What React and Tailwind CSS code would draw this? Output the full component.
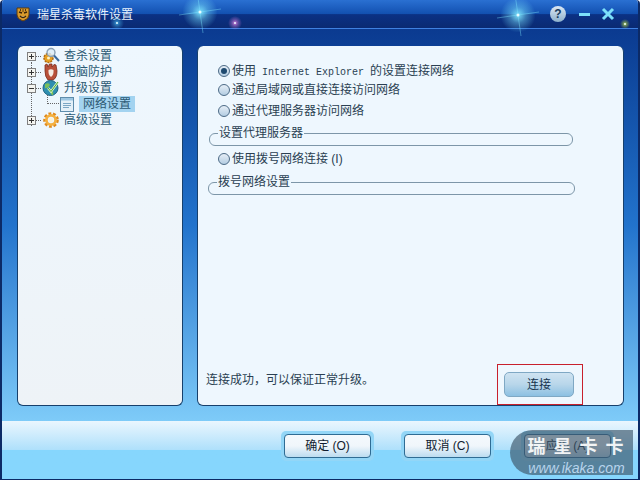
import React from 'react';

const cjk = "font-['Liberation_Sans','Noto_Sans_CJK_SC',sans-serif]";

function Star({ className, size = 40, color = '#7fe8ff' }) {
	const c = size / 2;
	const id = `g${size}${color.slice(1)}`;
	return (
		<svg className={`absolute ${className}`} width={size} height={size} viewBox={`0 0 ${size} ${size}`}>
			<defs>
				<radialGradient id={id}>
					<stop offset="0" stopColor={color} stopOpacity="0.95" />
					<stop offset="0.45" stopColor={color} stopOpacity="0.4" />
					<stop offset="1" stopColor={color} stopOpacity="0" />
				</radialGradient>
			</defs>
			<circle cx={c} cy={c} r={size > 20 ? c * 0.8 : c} fill={`url(#${id})`} />
			{size > 20 && <path d={`M${c - 3} 1 L${c + 3} ${size - 1} M1 ${c + 3} L${size - 1} ${c - 3}`} stroke={color} strokeWidth="1" opacity="0.4" />}
			<circle cx={c} cy={c} r={size > 20 ? 1.5 : 1} fill="#e8fbff" />
		</svg>
	);
}

function TigerLogo() {
	return (
		<svg width="16" height="16" viewBox="0 0 16 16">
			<path d="M2 2 L14 2 L14 9 Q14 13 8 15 Q2 13 2 9 Z" fill="#d99a2b" stroke="#5a3a10" strokeWidth="1" />
			<path d="M4 6 L7 7 M12 6 L9 7" stroke="#3a2408" strokeWidth="1.4" />
			<path d="M5 10 Q8 13 11 10" stroke="#3a2408" strokeWidth="1.2" fill="#f4d58a" />
			<path d="M8 3 V6 M5.5 3 V5 M10.5 3 V5" stroke="#5a3a10" strokeWidth="1" />
		</svg>
	);
}

function Twisty({ open }) {
	return (
		<span className="w-[9px] h-[9px] border border-[#808080] bg-[#f4f4f0] flex items-center justify-center relative shrink-0">
			<span className="absolute w-[5px] h-px bg-[#333]" />
			{!open && <span className="absolute w-px h-[5px] bg-[#333]" />}
		</span>
	);
}

function SearchGear() {
	return (
		<svg width="18" height="18" viewBox="0 0 18 18">
			<circle cx="6.5" cy="11" r="4.5" fill="#e8a020" stroke="#b06a10" strokeDasharray="2 1" strokeWidth="1.5" />
			<circle cx="6.5" cy="11" r="1.5" fill="#fff2c0" />
			<circle cx="9" cy="5.5" r="4" fill="#dcecf6" fillOpacity="0.8" stroke="#8aa0b4" strokeWidth="1.4" />
			<path d="M12 8.5 L17 14" stroke="#3a6a9c" strokeWidth="2" />
		</svg>
	);
}

function GloveIcon() {
	return (
		<svg width="18" height="18" viewBox="0 0 18 18">
			<path d="M3 2 L5 1 L6 4 L7.5 1 L10 1 L10 4 L12 1.5 L14 2 L15 8 Q15 15 11 17 L6 17 Q3 14 3 8 Z" fill="#b8503a" stroke="#7c2c1c" strokeWidth="0.8" />
			<path d="M6.5 7 Q6 12 9 14 Q12 12 11.5 7 Q9 5.5 6.5 7 Z" fill="#f4ece4" />
		</svg>
	);
}

function GlobeIcon() {
	return (
		<svg width="18" height="18" viewBox="0 0 18 18">
			<circle cx="8.5" cy="9" r="7.5" fill="#2f8fb0" stroke="#1d6280" strokeWidth="1" />
			<path d="M3 5 Q7 3 8 6 Q6 10 3 9 Z M9 12 Q12 12 11 16 Q8 16 9 12 Z" fill="#7bbf5a" />
			<path d="M6 9 L9 12.5 L16 3" stroke="#dcf5c0" strokeWidth="2.4" fill="none" />
			<path d="M6 9 L9 12.5 L16 3" stroke="#4aa838" strokeWidth="1" fill="none" />
		</svg>
	);
}

function PageIcon() {
	return (
		<svg width="14" height="15" viewBox="0 0 14 15">
			<rect x="0.5" y="0.5" width="13" height="14" fill="#e4f0f8" stroke="#5e8cab" />
			<rect x="1" y="1" width="12" height="2.5" fill="#9cc6e2" />
			<path d="M3 6.5 H11 M3 8.5 H11 M3 10.5 H9" stroke="#7ba6c4" />
		</svg>
	);
}

function GearIcon() {
	return (
		<svg width="18" height="18" viewBox="0 0 18 18">
			<circle cx="9" cy="9" r="6" fill="none" stroke="#e08a1c" strokeWidth="3.6" strokeDasharray="2.6 1.6" />
			<circle cx="9" cy="9" r="4.6" fill="none" stroke="#f4b040" strokeWidth="2.8" />
			<circle cx="9" cy="9" r="2.2" fill="#fbf2d8" />
		</svg>
	);
}

function TreeRow({ open, icon, label }) {
	return (
		<div className="flex items-center h-4">
			<Twisty open={open} />
			<span className="w-[5px] border-t border-dotted border-[#666] mr-px" />
			<span className="w-[18px] h-4 flex items-center justify-center shrink-0">{icon}</span>
			<span className="ml-[4px] text-[#2c5a74] text-xs">{label}</span>
		</div>
	);
}

function Radio({ checked }) {
	return (
		<span className="w-3 h-3 rounded-full border border-[#4c6a86] bg-gradient-to-b from-[#e6eef6] to-[#b4cde2] flex items-center justify-center shrink-0">
			{checked && <span className="w-[6px] h-[6px] rounded-full bg-[#1f4a70]" />}
		</span>
	);
}

function RadioRow({ checked, className, children }) {
	return (
		<div className={`flex items-center gap-[2px] h-4 text-xs text-[#2a3f52] ${className}`}>
			<Radio checked={checked} />
			<span className="whitespace-pre">{children}</span>
		</div>
	);
}

function Group({ label, className }) {
	return (
		<fieldset className={`h-[19px] border border-[#7d96a8] rounded-[6px] ${className}`}>
			<legend className="ml-[8px] px-px text-xs leading-[12px] text-[#2a3f52] bg-[#eef7fe]">{label}</legend>
		</fieldset>
	);
}

function DlgButton({ children }) {
	return (
		<div className="p-[3px] bg-[#93d6f7] rounded-[5px] shrink-0">
			<button className="block w-[87px] h-[24px] rounded-[4px] border border-[#2f6c94] bg-gradient-to-b from-[#f4f9fd] via-[#f0f6fb] to-[#bcdcf0] text-xs text-[#101c30]">
				{children}
			</button>
		</div>
	);
}

export default function App() {
	return (
		<div className={`relative w-[640px] h-[480px] overflow-hidden flex flex-col border-x-2 border-b border-[#0c2a66] rounded-t-[4px] ${cjk}`}>
			<div className="h-[29px] shrink-0 bg-[linear-gradient(to_bottom,#2a70d2_0%,#1250b0_50%,#0b3184_52%,#0a2a72_100%)] border-b border-[#3f80e0] flex items-center pl-[13px] pr-[23px]">
				<TigerLogo />
				<span className="ml-[6px] mt-[2px] text-xs text-[#e8f2fc]">瑞星杀毒软件设置</span>
				<div className="ml-auto flex items-center gap-[11px]">
					<span className="w-4 h-4 rounded-full bg-gradient-to-b from-[#dce8f4] to-[#8cb0cc] text-[#173a5c] text-xs font-bold flex items-center justify-center">?</span>
					<span className="w-[11px] h-[3px] bg-[#7ce0fa] ml-[2px]" />
					<svg width="14" height="14" viewBox="0 0 14 14">
						<path d="M2 2 L12 12 M12 2 L2 12" stroke="#7ce0fa" strokeWidth="3" />
					</svg>
				</div>
			</div>

			<div className="flex-1 bg-gradient-to-b from-[#0b3a90] via-[#2273cc] to-[#7ecbf8] flex gap-[14px] pl-[15px] pr-[14px] pt-[17px] pb-[15px]">
				<div className="relative w-[166px] bg-gradient-to-b from-[#eef7fe] to-[#eef3f7] rounded-[6px] border-b border-x border-[#17406c] pl-[9px] pt-[2px]">
					<div className="absolute left-[13px] top-[16px] h-[64px] border-l border-dotted border-[#666]" />
					<TreeRow icon={<SearchGear />} label="查杀设置" />
					<TreeRow icon={<GloveIcon />} label="电脑防护" />
					<TreeRow open icon={<GlobeIcon />} label="升级设置" />
					<div className="flex items-center h-4 pl-[20px]">
						<span className="w-[12px] h-[9px] border-l border-b border-dotted border-[#666] -mt-[9px] mr-px" />
						<PageIcon />
						<span className="ml-[5px] px-[4px] h-4 leading-4 bg-[#a3d3f0] text-xs text-[#2c5a74]">网络设置</span>
					</div>
					<TreeRow icon={<GearIcon />} label="高级设置" />
				</div>

				<div className="relative flex-1 bg-[#eef7fe] rounded-[6px] border-b border-x border-[#17406c] flex flex-col pl-[10px] pr-[50px]">
					<div className="flex flex-col pt-[17px] pl-[10px]">
						<RadioRow checked>
							使用<span className="font-['Liberation_Mono'] text-[10px]"> Internet Explorer </span>的设置连接网络
						</RadioRow>
						<RadioRow className="mt-[3px]">通过局域网或直接连接访问网络</RadioRow>
						<RadioRow className="mt-[5px]">通过代理服务器访问网络</RadioRow>
					</div>
					<Group label="设置代理服务器" className="mt-[8px] ml-px" />
					<RadioRow className="mt-[5px] ml-[10px]">使用拨号网络连接 (I)</RadioRow>
					<Group label="拨号网络设置" className="mt-[9px] -mr-[2px]" />
					<div className="mt-auto flex items-end -ml-[2px]">
						<span className="text-xs text-[#2a3f52] mb-[17px]">连接成功，可以保证正常升级。</span>
						<div className="absolute right-[40px] bottom-0 w-[86px] h-[41px] border border-[#c8202c] flex items-center pl-[6px]">
							<button className="w-[70px] h-[25px] rounded-[5px] border border-[#7fa8c4] bg-gradient-to-b from-[#cfe3f1] via-[#b8d6ea] to-[#8cc0e2] text-xs text-[#17344e]">连接</button>
						</div>
					</div>
				</div>
			</div>

			<div className="h-[58px] shrink-0 bg-gradient-to-b from-[#eaf6fe] from-0% via-[#aee0fb] via-50% to-[#86d6fd] to-50% flex items-center justify-end gap-[27px] pr-[24px] pb-[9px]">
				<DlgButton>确定 (O)</DlgButton>
				<DlgButton>取消 (C)</DlgButton>
				<DlgButton>应用 (A)</DlgButton>
			</div>

			<Star className="left-[176px] top-[-10px]" size={44} />
			<Star className="left-[108px] top-[16px]" size={14} color="#40a8e0" />
			<Star className="left-[226px] top-[16px]" size={14} color="#e080e0" />
			<Star className="left-[494px] top-[-7px]" size={44} />
			<Star className="left-[618px] top-[19px]" size={10} color="#c0e040" />

			<div className="absolute left-[508px] top-[430px] w-[123px] h-[45px] bg-[#3c5468]/65 rounded-l-[24px] flex flex-col items-center justify-center leading-none pl-[10px] pt-[3px]">
				<span className="text-lg font-bold text-white/90 tracking-[8px] ml-[6px]">瑞星卡卡</span>
				<span className="font-['Liberation_Sans'] italic text-[14px] text-[#b8d4ec]">www.ikaka.com</span>
			</div>
		</div>
	);
}
